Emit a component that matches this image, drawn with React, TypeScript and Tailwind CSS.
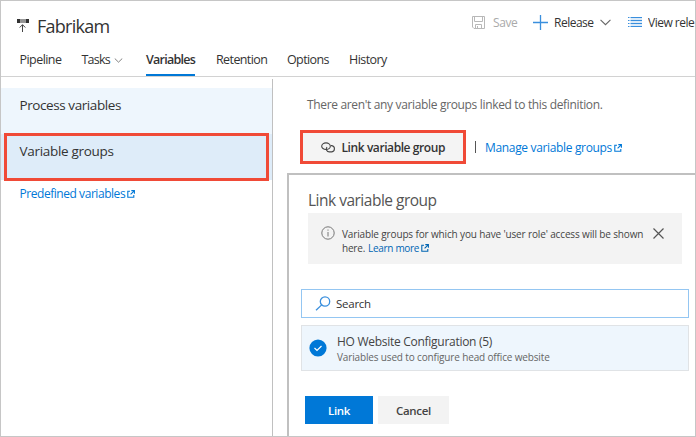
import type { ReactNode } from "react";

function External({ className = "" }: { className?: string }) {
  return (
    <svg className={className} width="8" height="8" viewBox="0 0 8 8" fill="none" stroke="currentColor" strokeWidth="1.1">
      <path d="M3 1.2H.8v6h6V5" />
      <path d="M4.3.6h3.1v3.1M7.2.8 3.6 4.4" />
    </svg>
  );
}

function Chevron({ width, height, className = "" }: { width: number; height: number; className?: string }) {
  return (
    <svg className={className} width={width} height={height} viewBox="0 0 10 6" fill="none" stroke="#666" strokeWidth="1">
      <path d="M.5.6 5 5 9.5.6" />
    </svg>
  );
}

function Tab({ className, children }: { className: string; children: ReactNode }) {
  return <a className={`h-[24px] shrink-0 leading-[16px] whitespace-nowrap ${className}`}>{children}</a>;
}

function Header() {
  return (
    <header className="h-[76px] shrink-0 border-b border-[#d2d2d2]">
      <div className="flex h-[50px] items-start">
        <svg className="mt-[18px] ml-[16px] shrink-0" width="12" height="14" viewBox="0 0 12 14">
          <path d="M0 0h3.5v4H0zM8.5 0H12v4H8.5z" fill="#333" />
          <path d="M3.5 0h5v4h-5z" fill="#999" />
          <path d="M4.5 1.5h3v1h-3z" fill="#eee" stroke="#777" strokeWidth=".6" />
          <path d="M5.5 13V5.800M2.700 8.500l2.800-2.800 2.800 2.800" fill="none" stroke="#444" />
        </svg>
        <h1 className="mt-[13px] ml-[8px] w-[81px] text-[18px] leading-[24px] tracking-[-0.75px] whitespace-nowrap text-[#333]">Fabrikam</h1>
        <div className="ml-[354px] flex h-[43px] shrink-0 items-center whitespace-nowrap text-[12px] leading-[16px] text-[#333]">
          <svg width="13" height="13" viewBox="0 0 13 13" fill="none" stroke="#b8b8b8">
            <path d="M.5.5h12v12H2L.5 11zM2.5.5v5h8v-5M3.500 12.500v-4h6v4M5.500 10v2" />
          </svg>
          <span className="mt-[1px] ml-[8px] w-[27px] tracking-[-0.4px] text-[#aaa]">Save</span>
          <svg className="ml-[13px]" width="15" height="15" viewBox="0 0 15 15" stroke="#3a8fdd" strokeWidth="1.3">
            <path d="M0 7.5h15M7.5 0v15" />
          </svg>
          <span className="mt-[1px] ml-[6px] w-[40px] tracking-[-0.5px]">Release</span>
          <Chevron className="ml-[6px]" width={11} height={7} />
          <svg className="ml-[17px]" width="14" height="11" viewBox="0 0 14 11" stroke="#3a8fdd">
            <path d="M0 .5h1.500M0 3.500h1.500M0 6.500h1.500M0 9.500h1.500M2.500.5H14M2.500 3.500H14M2.500 6.500H14M2.500 9.500H14" />
            <path d="M2.500 2H14M2.500 5H14M2.500 8H14" opacity=".35" />
          </svg>
          <span className="mt-[1px] ml-[6px] w-[47px] overflow-hidden tracking-[-0.5px]">View rele</span>
        </div>
      </div>
      <nav className="flex pt-[1px] pl-[18.5px] text-[12.5px] text-[#333]">
        <Tab className="w-[62px] tracking-[-0.55px]">Pipeline</Tab>
        <Tab className="flex w-[64.5px] tracking-[-0.8px]">
          Tasks
          <Chevron className="mt-[6px] ml-[4px]" width={9} height={5} />
        </Tab>
        <Tab className="w-[49px] border-b-2 border-[#0078d7] font-semibold tracking-[-0.75px]">Variables</Tab>
        <Tab className="ml-[21px] w-[71px] tracking-[-0.6px]">Retention</Tab>
        <Tab className="w-[62px] tracking-[-0.6px]">Options</Tab>
        <Tab className="w-[40px] tracking-[-0.55px]">History</Tab>
      </nav>
    </header>
  );
}

function Sidebar() {
  return (
    <aside className="mt-[2px] flex w-[272px] shrink-0 flex-col border-r border-[#c0c0c0] pt-[9px] text-[13.5px] leading-[18px] text-[#333]">
      <div className="h-[46px] bg-[#eef6fd] pt-[8px] pl-[18.5px] tracking-[-0.42px]">Process variables</div>
      <div className="relative h-[46px] bg-[#deecf9] pt-[8px] pl-[18.5px] tracking-[-0.3px]">
        Variable groups
        <div className="absolute top-[-1px] left-[3px] h-[48px] w-[265px] border-3 border-[#f04a37]" />
      </div>
      <a className="flex items-center pt-[5px] pl-[18.5px] text-[12px] tracking-[-0.45px] text-[#0078d7]">
        Predefined variables
        <External className="ml-[2px]" />
      </a>
    </aside>
  );
}

function LinkPanel() {
  return (
    <section className="mt-[9px] ml-[14px] flex-1 border-t-2 border-l-2 border-[#c0c0c0] pl-[12px]">
      <h2 className="ml-[7px] pt-[14px] text-[15.5px] leading-[22px] tracking-[-0.5px] text-[#555]">Link variable group</h2>
      <div className="mt-[2px] ml-[7px] flex h-[51px] w-[374px] bg-[#f3f3f3] text-[10px] leading-[14px] text-[#444]">
        <svg className="mt-[13px] ml-[13px] shrink-0" width="14" height="14" viewBox="0 0 14 14" fill="none" stroke="#777">
          <circle cx="7" cy="7" r="6.2" />
          <path d="M7 6v4.500M7 3.500v1.200" />
        </svg>
        <div className="mt-[13.5px] ml-[7px] w-[305px] whitespace-nowrap">
          <div className="tracking-[-0.14px]">Variable groups for which you have 'user role' access will be shown</div>
          <div className="flex items-center">
            <span className="w-[26px] tracking-[-0.2px]">here.</span>
            <a className="flex items-center tracking-[-0.3px] text-[#0065b3]">
              Learn more
              <External className="ml-[2px]" />
            </a>
          </div>
        </div>
        <svg className="mt-[15px] ml-[6px]" width="11" height="11" viewBox="0 0 11 11" stroke="#555" strokeWidth="1.2">
          <path d="m.5.5 10 10M10.5.5l-10 10" />
        </svg>
      </div>
      <div className="mt-[25px] flex h-[29px] w-[388px] items-center border border-[#94c6f2] pl-[13px]">
        <svg width="16" height="15" viewBox="0 0 16 15" fill="none" stroke="#3a8fdd" strokeWidth="1.3">
          <circle cx="10" cy="5.5" r="4.700" />
          <path d="M6.700 8.900 1 14.300" />
        </svg>
        <span className="ml-[5px] text-[11.5px] leading-[16px] tracking-[-0.25px] text-[#333]">Search</span>
      </div>
      <div className="mt-[7px] flex h-[46px] w-[388px] border border-[#e0e3e6] bg-[#eef6fd]">
        <svg className="mt-[13px] ml-[7px]" width="18" height="18" viewBox="0 0 18 18">
          <circle cx="9" cy="9" r="8.6" fill="#0078d7" />
          <path d="m5.5 9 2.500 2.500 4.500-4.500" fill="none" stroke="#fff" strokeWidth="1.2" />
        </svg>
        <div className="ml-[10px] pt-[8px]">
          <div className="text-[12px] leading-[16px] tracking-[-0.28px] text-[#444]">HO Website Configuration (5)</div>
          <div className="text-[10px] leading-[14px] tracking-[-0.15px] text-[#666]">Variables used to configure head office website</div>
        </div>
      </div>
      <div className="mt-[25px] ml-[4px] flex h-[28px] gap-[5px] text-[11.5px] leading-[16px] font-semibold">
        <button className="w-[68px] bg-[#0078d7] pt-[2px] tracking-[-0.35px] text-white">Link</button>
        <button className="w-[71px] bg-[#f3f3f3] pt-[2px] tracking-[-0.3px] text-[#444]">Cancel</button>
      </div>
    </section>
  );
}

export default function App() {
  return (
    <div className="flex h-[437px] w-[696px] flex-col overflow-hidden border border-[#c6c6c6] bg-white font-['Open_Sans',sans-serif]">
      <Header />
      <div className="flex min-h-0 flex-1">
        <Sidebar />
        <main className="flex flex-1 flex-col">
          <p className="mt-[20px] ml-[34px] text-[12px] leading-[16px] tracking-[-0.34px] text-[#666]">
            There aren't any variable groups linked to this definition.
          </p>
          <div className="mt-[17px] ml-[27px] flex h-[34px] items-center text-[12px] whitespace-nowrap">
            <button className="flex h-[34px] w-[166px] items-center border-3 border-[#f04a37] bg-[#f4f4f4] pl-[18px] font-semibold tracking-[-0.42px] text-[#333]">
              <svg width="15" height="11" viewBox="0 0 15 11" fill="none" stroke="#444" strokeWidth="1.1">
                <ellipse cx="5" cy="4.200" rx="4.300" ry="3.300" />
                <path d="M9.800 3.600h1a3.200 3.200 0 0 1 0 6.300H8.300A3 3 0 0 1 6 5" />
              </svg>
              <span className="mt-[2px] ml-[5.5px]">Link variable group</span>
            </button>
            <span className="ml-[9px] h-[12px] w-px bg-[#555]" />
            <a className="mt-[2px] ml-[9px] flex items-center tracking-[-0.34px] text-[#0078d7]">
              Manage variable groups
              <External className="ml-[2px]" />
            </a>
          </div>
          <LinkPanel />
        </main>
      </div>
    </div>
  );
}
